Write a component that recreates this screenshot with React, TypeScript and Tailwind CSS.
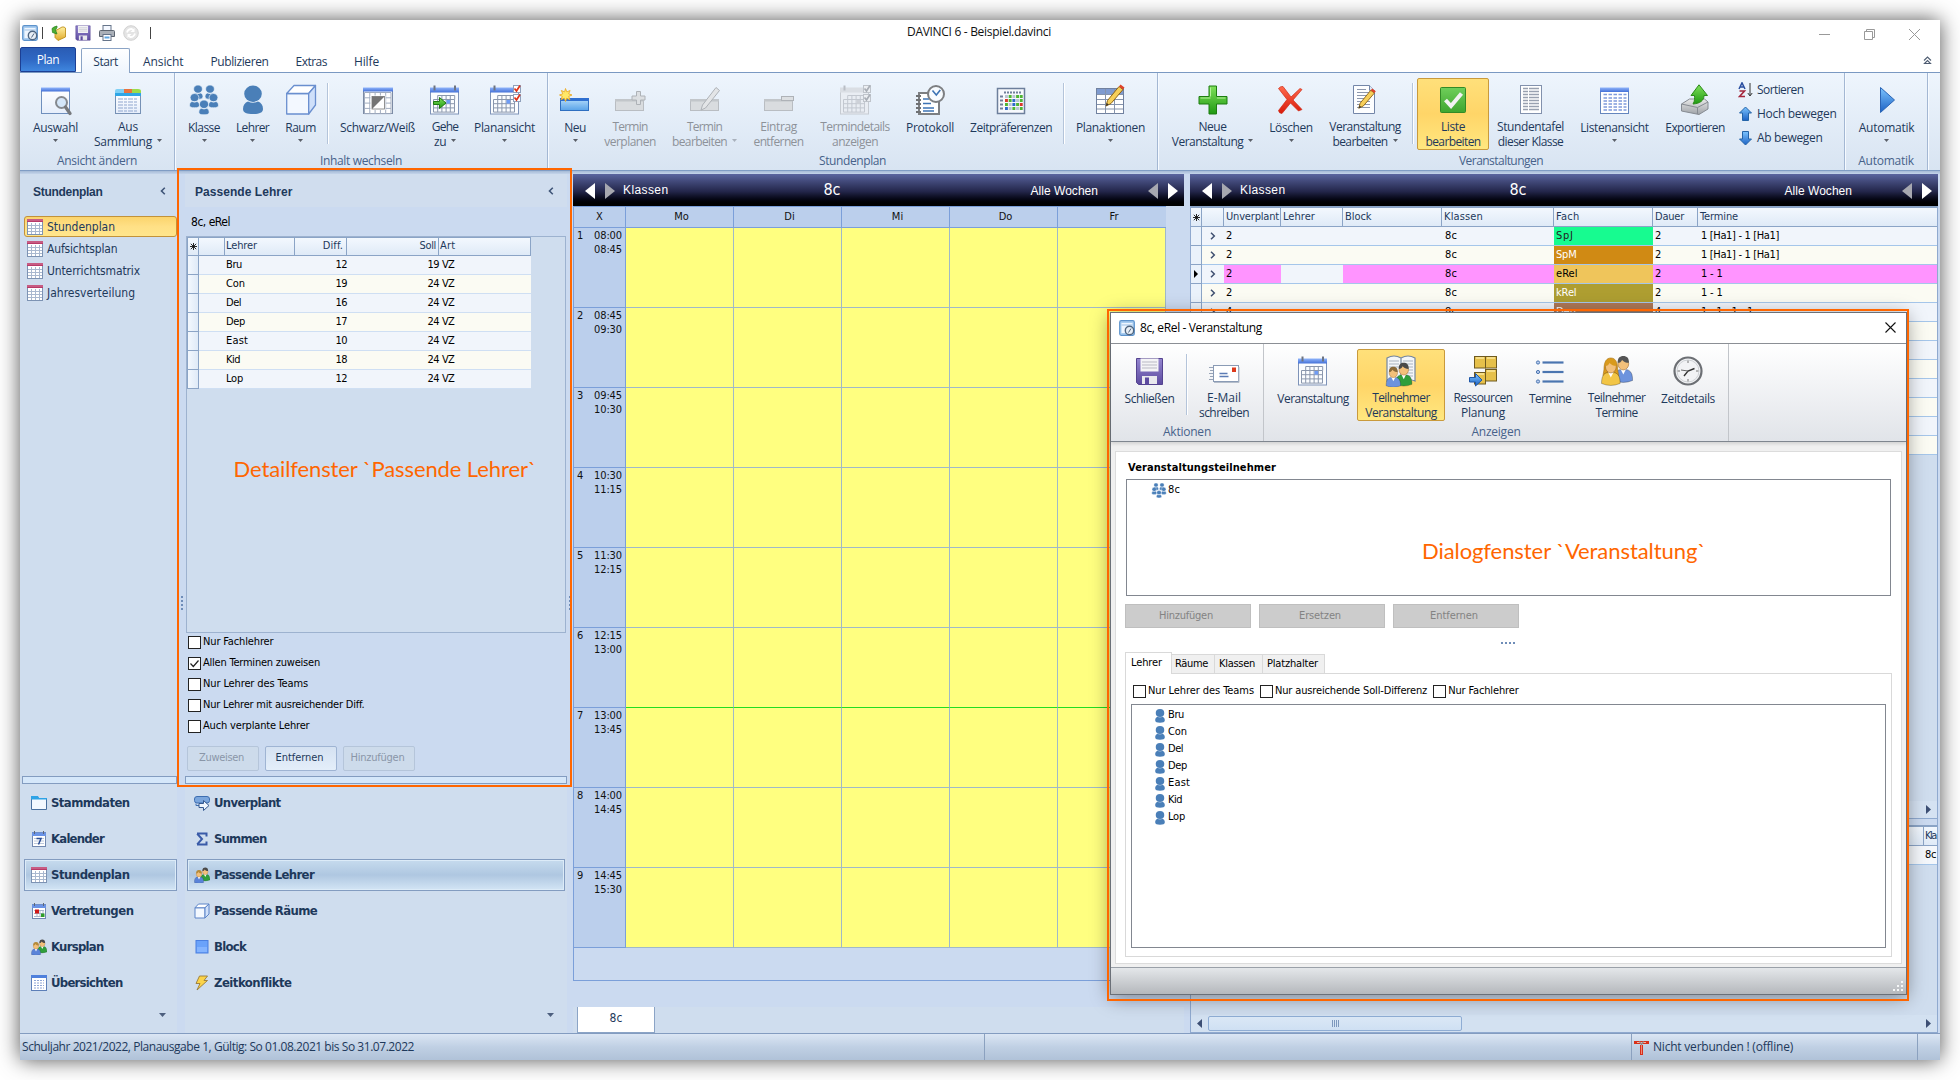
import React, { useLayoutEffect, useRef } from "react";

type Kids = { children?: React.ReactNode };

/** Text tracked so that it takes up the given width in pixels. */
function T({ w, className = "", children }: { w: number; className?: string; children: string }) {
  const ref = useRef<HTMLSpanElement>(null);
  useLayoutEffect(() => {
    const el = ref.current;
    if (!el) return;
    el.style.letterSpacing = "0px";
    const natural = el.getBoundingClientRect().width;
    el.style.letterSpacing = `${(w - natural) / children.length}px`;
  }, [w, children]);
  return (
    <span ref={ref} className={"inline-block whitespace-pre " + className}>
      {children}
    </span>
  );
}

const SEGOE = "font-['Open_Sans',sans-serif]";
const TAHOMA = "font-['DejaVu_Sans_Condensed','Noto_Sans',sans-serif]";
const ARIAL = "font-['Liberation_Sans',sans-serif]";

/* ---------- icons ---------- */

function I32({ children }: Kids) {
  return (
    <svg width="32" height="32" viewBox="0 0 32 32" className="block shrink-0">
      {children}
    </svg>
  );
}
function I16({ children }: Kids) {
  return (
    <svg width="16" height="16" viewBox="0 0 16 16" className="block shrink-0">
      {children}
    </svg>
  );
}

function Defs() {
  const grads: [string, string, string][] = [
    ["gBlue", "#8fb4fb", "#4471d8"],
    ["gGreen", "#7fe05a", "#1f9a12"],
    ["gRed", "#ff6a4d", "#d81a0a"],
    ["gYellow", "#fff0a0", "#e0a92a"],
    ["gPurple", "#9486cf", "#5d4ba0"],
    ["gPaper", "#ffffff", "#e6eefb"],
    ["gSky", "#7cc4ff", "#1d62c4"],
    ["gGray", "#e9e9e9", "#9fa3a8"],
    ["gBar", "#b4dcfb", "#58a2e8"],
    ["gCheck", "#6fcf5a", "#3fa52f"],
  ];
  return (
    <svg width="0" height="0" className="absolute">
      <defs>
        {grads.map(([id, a, b]) => (
          <linearGradient key={id} id={id} x1="0" y1="0" x2="0" y2="1">
            <stop offset="0" stopColor={a} />
            <stop offset="1" stopColor={b} />
          </linearGradient>
        ))}
      </defs>
    </svg>
  );
}

const AuswahlIcon = () => (
  <I32>
    <rect x="1.5" y="4.5" width="28" height="25" fill="url(#gPaper)" stroke="#6f8fbd" />
    <rect x="1" y="3.500" width="29" height="4" fill="url(#gBlue)" />
    <circle cx="21.5" cy="18.5" r="5.5" fill="#cfe3f8" fillOpacity=".85" stroke="#85898f" strokeWidth="2" />
    <path d="M25.5 23l4.500 6.500" stroke="#77797d" strokeWidth="3.2" strokeLinecap="round" />
  </I32>
);
const SammlungIcon = () => (
  <I32>
    <rect x="3.5" y="9.5" width="25" height="20" fill="url(#gPaper)" stroke="#7691b5" />
    <path d="M3 11V7q0-2 2-2h8v6z" fill="#7fd0f5" />
    <path d="M12 9.500V5h8v4.500z" fill="#e8733f" />
    <path d="M20 9.500V5h6q3 0 3 2v2.500z" fill="#9bdc4a" />
    <path d="M3 9h26v3H3z" fill="#2fa6e6" />
    {[15, 18, 21, 24, 27].map((y) => (
      <path key={y} d={`M6 ${y}h20`} stroke="#8fa6cf" strokeDasharray="5 1 3 1" />
    ))}
  </I32>
);
function Person({ x, y, s, fill = "#4a7fb8" }: { x: number; y: number; s: number; fill?: string }) {
  return (
    <g transform={`translate(${x} ${y}) scale(${s})`} fill={fill}>
      <ellipse cx="10" cy="8.200" rx="8.800" ry="8.200" />
      <path d="M0 23.500c0-4 2-6.500 5-7.500q5 2.500 10 0c3 1 5 3.500 5 7.500c0 4-4 5-10 5S0 27.500 0 23.500z" />
    </g>
  );
}
const PeopleShape = () => (
  <g stroke="#eaf2fb" strokeWidth="1.4">
    <Person x={5} y={1} s={0.5} />
    <Person x={17} y={1} s={0.5} />
    <Person x={1.500} y={9.500} s={0.500} />
    <Person x={20.500} y={9.500} s={0.500} />
    <Person x={10.8} y={16} s={0.52} />
  </g>
);
const KlasseIcon = () => (
  <I32>
    <PeopleShape />
  </I32>
);
const LehrerIcon = () => (
  <I32>
    <Person x={6} y={1.5} s={1} />
  </I32>
);
const RaumIcon = () => (
  <I32>
    <g stroke="#6a8fcf" strokeWidth="1.3" strokeLinejoin="round">
      <path d="M1.7 9.5h22v20.5h-22z" fill="#f3f8ff" />
      <path d="M1.7 9.5L9 1.5h21.5l-6.8 8z" fill="#fff" />
      <path d="M23.7 9.5l6.8-8V21l-6.8 9z" fill="#cfe0fa" />
    </g>
  </I32>
);
function GridLines({ x, y, c, r, s = 4, stroke = "#8794ab" }: { x: number; y: number; c: number; r: number; s?: number; stroke?: string }) {
  let d = "";
  for (let i = 0; i <= c; i++) d += `M${x + i * s} ${y}v${r * s}`;
  for (let i = 0; i <= r; i++) d += `M${x} ${y + i * s}h${c * s}`;
  return <path d={d} stroke={stroke} fill="none" />;
}
const SchwarzIcon = () => (
  <I32>
    <rect x="1.5" y="4.5" width="29" height="25" fill="#fff" stroke="#7c8ba5" />
    <GridLines x={2.5} y={8.5} c={5} r={4} s={5.3} stroke="#a2adc0" />
    <rect x="1" y="3.5" width="30" height="4" fill="url(#gBlue)" />
    <rect x="8.5" y="11.5" width="15" height="14.500" fill="#fff" />
    <rect x="10" y="12.500" width="12.500" height="12.500" fill="#fff" stroke="#777" strokeWidth=".8" />
    <path d="M10 12.500h12.500L10 25z" fill="#747474" />
  </I32>
);
function CalShape({ gray = false }: { gray?: boolean }) {
  const line = gray ? "#c6cbd2" : "#7e93b8";
  const inner = gray ? "#c3c8d0" : "#8a97ad";
  return (
    <g>
      <rect x="1.500" y="5.500" width="28" height="24.500" fill={gray ? "#e9edf3" : "#fbfdff"} stroke={line} />
      <rect x="1" y="3.500" width="29" height="5" fill={gray ? "#dadee4" : "url(#gBlue)"} />
      <path d="M5.500 1.500v5M26 1.500v5" stroke={gray ? "#b9bec6" : "#6d7482"} strokeWidth="2" />
      <GridLines x={4.500} y={15.500} c={5} r={3} s={4.200} stroke={inner} />
      <path d="M8.700 11.500h17v4" stroke={inner} fill="none" />
      <path d="M8.700 11.500v4M12.900 11.500v4M17.100 11.500v4M21.300 11.500v4" stroke={inner} />
      <rect x="17.500" y="16" width="3.600" height="3.600" fill={gray ? "#cdd1d8" : "#6f9cf5"} />
    </g>
  );
}
const Ticks = ({ gray = false }: { gray?: boolean }) => (
  <g>
    {[1, 10].map((y) => (
      <g key={y}>
        <rect x="24.500" y={y + 0.500} width="7" height="7" fill={gray ? "#eceff3" : "#fff"} stroke={gray ? "#bfc4cb" : "#8fa0bb"} />
        <path d={`M25.500 ${y + 3.500}l2 2.500 3.500-5.500`} fill="none" stroke={gray ? "#a9aeb6" : "#e03217"} strokeWidth="1.700" />
      </g>
    ))}
  </g>
);
const GeheIcon = () => (
  <I32>
    <CalShape />
    <path d="M4.500 17.500h6v-4l6.500 5.500-6.500 5.500v-4h-6z" fill="url(#gGreen)" stroke="#1f7a10" />
  </I32>
);
const PlanansichtIcon = () => (
  <I32>
    <CalShape />
    <Ticks />
  </I32>
);
const CalIcon = () => (
  <I32>
    <CalShape />
  </I32>
);
const TermindetailsIcon = () => (
  <I32>
    <CalShape gray />
    <Ticks gray />
  </I32>
);
const NeuIcon = () => (
  <I32>
    <rect x="1.500" y="14.500" width="28" height="12" fill="url(#gBar)" stroke="#2f6fc0" />
    <rect x="1" y="14" width="29" height="3" fill="#2f6fd0" />
    <path d="M6.500 4.500l1.300 3.400 3.300-1.400-1.400 3.300 3.300 1.200-3.300 1.400 1.300 3.300-3.300-1.400-1.200 3.200-1.300-3.300-3.300 1.500 1.400-3.400L.5 11l3.300-1.200-1.500-3.300 3.300 1.400z" fill="#ffe868" stroke="#eaa51c" strokeWidth=".8" />
  </I32>
);
const GrayBar = () => (
  <g>
    <rect x="1.500" y="15.500" width="28" height="11" fill="#d9dcdf" stroke="#b9bdc2" />
    <rect x="1" y="15" width="29" height="2.500" fill="#c2c6ca" />
  </g>
);
const TerminPlusIcon = () => (
  <I32>
    <GrayBar />
    <path d="M22.500 7.500h4v4.500h4.500v4h-4.500v4.500h-4V16H18v-4h4.500z" fill="#dcdfe2" stroke="#aeb2b7" />
  </I32>
);
const TerminEditIcon = () => (
  <I32>
    <GrayBar />
    <path d="M12 26l1.500-5L27 3.500l3.500 3L16.500 24z" fill="#e3e5e7" stroke="#aeb2b7" />
  </I32>
);
const EintragIcon = () => (
  <I32>
    <GrayBar />
    <rect x="18.500" y="12.500" width="12" height="4" fill="#dcdfe2" stroke="#aeb2b7" />
  </I32>
);
const ProtokollIcon = () => (
  <I32>
    <rect x="5" y="9" width="20" height="21" fill="#fff" stroke="#7d7f82" strokeWidth="2" />
    <path d="M2 12h5M2 16h5M2 20h5M2 24h5M2 28h5" stroke="#6f7174" strokeWidth="1.800" />
    <path d="M9 15h6M9 19.500h8M9 24h11M9 27h11" stroke="#3e74b5" strokeWidth="1.600" />
    <circle cx="22" cy="10" r="8" fill="#f7fbff" stroke="#7d7f82" strokeWidth="2" />
    <path d="M18.500 6.500l3.800 4.500 4-5" fill="none" stroke="#3e74b5" strokeWidth="1.600" />
  </I32>
);
const ZeitIcon = () => (
  <I32>
    <rect x="2.500" y="4.500" width="27" height="25" fill="#f7f9fd" stroke="#6d7f9c" strokeWidth="1.500" />
    <path d="M9 8.500h18" stroke="#6f7f9b" strokeWidth="2" strokeDasharray="2 1" />
    <path d="M5 12.500h3M5 16.500h3M5 20.500h3M5 24.500h3" stroke="#6f7f9b" strokeWidth="2" />
    {[0, 1, 2, 3].map((r) =>
      [0, 1, 2, 3, 4].map((c) => {
        const k = "wgwggrgbwggwbgrbwgwg"[r * 5 + c];
        const f = k === "g" ? "#4fb534" : k === "b" ? "#2f6ac8" : k === "r" ? "#d8382a" : "#b9c4d2";
        return <rect key={r + "-" + c} x={10 + c * 3.700} y={11 + r * 4} width="2.900" height="3" fill={f} />;
      })
    )}
  </I32>
);
const Pencil = ({ x = 0, y = 0, s = 1 }: { x?: number; y?: number; s?: number }) => (
  <g transform={`translate(${x} ${y}) scale(${s})`}>
    <path d="M9 22l1.500-5.500L22 2.500l4 3L14 19.500z" fill="#f6cf5a" stroke="#8e6415" />
    <path d="M22 2.500l1.500-2 4 3-1.500 2z" fill="#e0432a" />
    <path d="M9 22l.8-3 2 1.600z" fill="#333" />
  </g>
);
const PlanaktionenIcon = () => (
  <I32>
    <rect x="1.500" y="4.500" width="27" height="25" fill="#fff" stroke="#70819f" />
    <rect x="2" y="5" width="26" height="5" fill="#7f9bd0" />
    <path d="M2 10.500h26M2 15.500h26M2 20.500h26M2 25h26M10.500 5v24.500M19.500 5v24.500" stroke="#8593ab" fill="none" />
    <Pencil x={2} y={0} />
  </I32>
);
const PlusIcon = () => (
  <I32>
    <path d="M12 2h7.500v10.500H30V20H19.500v10H12V20H2v-7.500h10z" fill="url(#gGreen)" stroke="#1d7d10" />
    <path d="M13.500 12.500v-9M3.500 14h10M20 14h8.500" stroke="#b4f09a" fill="none" />
  </I32>
);
const DeleteIcon = () => (
  <I32>
    <path d="M3.500 4.500q2-2.500 4.500-2L16 13l9-8.500 2 1L18 16l9 9.500-3.500 1.500L15.500 19 7 29.500q-3 0-3.500-3L12 15.500z" fill="url(#gRed)" stroke="#cf2a16" strokeWidth=".7" />
  </I32>
);
const DocEditIcon = () => (
  <I32>
    <path d="M4.500 1.500h16l5 5v23h-21z" fill="#fdfeff" stroke="#7386a8" />
    <path d="M20.500 1.500v5h5" fill="#dfe8f6" stroke="#7386a8" />
    {[5, 8, 11, 14, 17, 20, 23].map((y) => (
      <path key={y} d={`M8 ${y}.500h${y < 8 ? 9 : 13}`} stroke="#8c97ad" />
    ))}
    <Pencil x={1.500} y={4} s={0.920} />
  </I32>
);
const ListeIcon = () => (
  <I32>
    <rect x="3.500" y="3.500" width="25" height="25" rx="1" fill="url(#gCheck)" stroke="#338a26" />
    <path d="M8.500 16l5.500 6L24.500 9.500" stroke="#f2f2f2" strokeWidth="4" fill="none" />
  </I32>
);
const TafelIcon = () => (
  <I32>
    <rect x="5.500" y="1.500" width="21" height="28" fill="#fff" stroke="#8291ad" />
    {[4, 7, 10, 13, 16, 19, 22, 25].map((y) => (
      <path key={y} d={`M8 ${y}.500h5M14 ${y}.500h10`} stroke="#99a1b0" strokeWidth="1.300" />
    ))}
  </I32>
);
const ListenIcon = () => (
  <I32>
    <rect x="1.500" y="4.500" width="28" height="25" fill="#fff" stroke="#6485bd" />
    <rect x="1" y="3.500" width="29" height="4.500" fill="url(#gBlue)" />
    {[10.500, 14, 17, 20, 23, 26].map((y) => (
      <path key={y} d={`M4.500 ${y}h23`} stroke="#7f9bdc" strokeWidth="1.300" strokeDasharray="3.500 1.500" />
    ))}
  </I32>
);
const ExportIcon = () => (
  <I32>
    <path d="M2.500 20l8-5h15l3.500 3v7l-9 5.500L2.500 27z" fill="url(#gGray)" stroke="#868b92" />
    <path d="M2.500 20l16 3.500L29 18M18.500 23.500v6.500" fill="none" stroke="#868b92" />
    <path d="M14 20c2-3 1.500-6 1.500-8.500H12L20 .8l8.500 10.700H25c0 5-4 8-11 8.500z" fill="url(#gGreen)" stroke="#2c8a1a" />
  </I32>
);
const PlayIcon = () => (
  <I32>
    <path d="M9.500 3.500L23.500 16l-14 12.500z" fill="url(#gSky)" stroke="#2a64b5" />
  </I32>
);
const DiskShape = () => (
  <g>
    <path d="M2.500 3.500h26v26h-24l-2-2z" fill="url(#gPurple)" stroke="#54438f" />
    <rect x="6.500" y="3.500" width="18" height="13" fill="#f4f4f6" />
    <path d="M8 7h15M8 10h15M8 13h15" stroke="#b9b9c4" />
    <rect x="8" y="21" width="15" height="8" fill="#e9e9ee" />
    <rect x="11" y="22.500" width="4" height="7" fill="#5d4ba0" />
  </g>
);
const DiskIcon = () => (
  <I32>
    <DiskShape />
  </I32>
);
const MailIcon = () => (
  <I32>
    <rect x="5.500" y="10.500" width="25" height="16" fill="#fff" stroke="#8a9bb5" />
    <path d="M6 27.500h25V12" stroke="#b4bdca" fill="none" />
    <path d="M1 12.500h4M2 15.500h3M1 18.500h4M2 21.500h3M1 24.500h4" stroke="#98a4b7" />
    <rect x="24" y="12.500" width="4" height="4.500" fill="#dd3a1c" />
    <path d="M11.500 18.500h8M11.500 21.500h9" stroke="#5c7cb5" strokeWidth="1.400" />
  </I32>
);
function Avatar({ x, y, s, shirt, hair, long = false }: { x: number; y: number; s: number; shirt: string; hair: string; long?: boolean }) {
  return (
    <g transform={`translate(${x} ${y}) scale(${s})`}>
      {long && <path d="M2 12C2 3 5 0 9 0s7 3 7 12l1 6H1z" fill="#d99a1c" stroke="#a8710e" strokeWidth=".6" />}
      <path d="M-.5 26c0-7 2-10 5.500-11h8c3.500 1 5.500 4 5.500 11q-9.500 4-19 0z" fill={shirt} stroke="#00000055" strokeWidth=".8" />
      <path d="M6 14l3 6 3-6z" fill="#fff" />
      <ellipse cx="9" cy="9" rx="5.500" ry="6.200" fill="#f3c07a" stroke="#a0692b" strokeWidth=".6" />
      <path d="M3.300 8C3 3 5.500 1 9 1s6 2 5.700 7c-3 0-5-1-7-3-1 2-2 3-4.400 3z" fill={hair} />
    </g>
  );
}
const TeilnehmerVerIcon = () => (
  <I32>
    <path d="M2 3q7-4 14 0v23q-7-3-14 0zM30 3q-7-4-14 0v23q7-3 14 0z" fill="#f4f6f8" stroke="#73869f" strokeWidth="1.200" />
    <path d="M18 6h10M18 9h10M18 12h10M18 15h10M18 18h10M18 21h10M4 6h10M4 9h10M4 12h10" stroke="#a9b3c0" />
    <Avatar x={11} y={7} s={0.860} shirt="#2f9e3b" hair="#4a4a4a" />
    <Avatar x={1.500} y={11} s={0.760} shirt="#6d93dd" hair="#8a6a3a" />
  </I32>
);
const RessourcenIcon = () => (
  <I32>
    {[[8, 1], [19, 1], [19, 14], [8, 17]].map(([x, y], i) => (
      <g key={i}>
        <rect x={x - 0.500} y={y + 0.500} width="11" height="11.500" fill="#e6c04a" stroke="#6f5a20" />
        <path d={`M${x + 1} ${y + 2}h8`} stroke="#fbe79a" strokeWidth="1.500" />
      </g>
    ))}
    <path d="M2.500 22.500h6v-4l6.500 6.500-6.500 6v-4h-6z" fill="url(#gSky)" stroke="#1f57a8" />
  </I32>
);
const TermineIcon = () => (
  <I32>
    {[7.500, 17, 26.500].map((y) => (
      <g key={y} stroke="#4a75b0">
        <circle cx="4" cy={y} r="1.600" fill="#b8cdf0" />
        <path d={`M8.500 ${y}h21`} strokeWidth="2.200" />
      </g>
    ))}
  </I32>
);
const TeilnehmerIcon = () => (
  <I32>
    <Avatar x={13.500} y={0} s={0.980} shirt="#6d93dd" hair="#555" />
    <Avatar x={1} y={3} s={0.980} shirt="#f2c545" hair="#d99a1c" long />
  </I32>
);
const ClockIcon = () => (
  <I32>
    <circle cx="16" cy="16" r="13.500" fill="#f2f3f5" stroke="#6c6f74" strokeWidth="2.200" />
    <circle cx="16" cy="16" r="11" fill="none" stroke="#cfd2d6" />
    <path d="M16 5.500v2.500M16 24v2.500M5.500 16H8M24 16h2.500" stroke="#777" />
    <path d="M12 21l4-5 6.500-2.500" stroke="#333" strokeWidth="1.400" fill="none" />
    <path d="M9 15l7 1" stroke="#666" />
  </I32>
);

const AppIcon = () => (
  <I16>
    <rect x=".7" y=".7" width="14.600" height="14.600" rx="1.500" fill="#a9cdf0" stroke="#5d93cc" strokeWidth="1.200" />
    <path d="M2.500 3h11v10h-11z" fill="#eef6ff" />
    <path d="M2.500 5h11" stroke="#9fc1e4" />
    <circle cx="10.500" cy="10.500" r="4.200" fill="#e8eef5" stroke="#4f6681" strokeWidth="1.400" />
    <path d="M9.500 12.500l2.500-4" stroke="#4f6681" />
  </I16>
);
const FolderOpenIcon = () => (
  <I16>
    <path d="M4 6l7-4h2l1.500 1v9L7 15.500l-3-3z" fill="url(#gYellow)" stroke="#b8860b" strokeWidth=".8" />
    <path d="M1.500 7.500L1 3.500 3 2l3-1v1.500L4.500 5l1.500 4z" fill="#4caf35" stroke="#22801a" strokeWidth=".7" />
  </I16>
);
const SmallDisk = () => (
  <svg width="16" height="16" viewBox="1 2 29 29" className="block shrink-0">
    <DiskShape />
  </svg>
);
const PrinterIcon = () => (
  <I16>
    <rect x="4" y=".5" width="8" height="6" fill="#f4f8ff" stroke="#66758a" />
    <path d="M.5 6.500q0-1 1-1h13q1 0 1 1v5H.5z" fill="#aab0b8" stroke="#5c6570" />
    <rect x="4" y="9.500" width="8" height="6" fill="#fff" stroke="#66758a" />
    <path d="M5.500 11.500h5v2h-5z" fill="#5da4e0" />
  </I16>
);
const SyncIcon = () => (
  <I16>
    <circle cx="8" cy="8" r="7.300" fill="#e4e4e4" stroke="#d2d2d2" />
    <path d="M4 7.500Q5 4 8.500 4l2 1M12 8.500Q11 12 7.500 12l-2-1" stroke="#fff" strokeWidth="1.800" fill="none" />
    <path d="M11.500 3v4h-4zM4.500 13V9h4z" fill="#fff" />
  </I16>
);
const TableIcon = () => (
  <I16>
    <rect x=".5" y=".5" width="15" height="15" fill="#fff" stroke="#7d93b3" />
    <rect x="0" y="0" width="16" height="3" fill="#b83a68" />
    <path d="M0 1h16" stroke="#d67f9e" />
    <path d="M1 6.500h14M1 9.500h14M1 12.500h14M4.500 4v11M8.500 4v11M12.500 4v11" stroke="#a9b8cf" />
  </I16>
);
const FolderIcon = () => (
  <I16>
    <path d="M.5 14.500v-13h6l1 2h8v11z" fill="#f2f8ff" stroke="#49709f" />
    <path d="M0 4.500V1h7l1 2h8v1.500z" fill="#2ea3e6" />
  </I16>
);
const Cal7Icon = () => (
  <I16>
    <rect x="1.500" y="1.500" width="13" height="14" fill="#fff" stroke="#7188b0" />
    <rect x="1" y="1.500" width="14" height="3.500" fill="#6a93e6" />
    <path d="M3.500 0v3M12.500 0v3" stroke="#5d6678" />
    <path d="M3 7.500h10M3 10h10M3 12.500h10" stroke="#bcc8dc" />
    <path d="M5.500 7.500h4.500l-2.500 6" stroke="#2a4d94" strokeWidth="1.500" fill="none" />
  </I16>
);
const VertretungIcon = () => (
  <I16>
    <rect x="1.500" y="1.500" width="13" height="14" fill="#fff" stroke="#7188b0" />
    <rect x="1" y="1.500" width="14" height="3.500" fill="#6a93e6" />
    <path d="M3.500 0v3M12.500 0v3" stroke="#5d6678" />
    <path d="M3 7.500h10M3 10.500h10M3 13.500h10M6 7v7M9 7v7M12 7v7" stroke="#a9b6cc" />
    <rect x="4" y="6.500" width="4" height="4" fill="#d01818" />
    <rect x="10" y="10.500" width="3.500" height="3.500" fill="#2f9e28" />
  </I16>
);
const DuoIcon = () => (
  <svg width="16" height="16" viewBox="0 0 32 32" className="block shrink-0">
    <Avatar x={13.500} y={0} s={1} shirt="#2f9e3b" hair="#4a4a4a" />
    <Avatar x={1} y={5} s={1} shirt="#5a83d8" hair="#b58a3a" />
  </svg>
);
const UebersichtIcon = () => (
  <I16>
    <rect x=".5" y=".5" width="15" height="15" fill="#fff" stroke="#5d7fb8" />
    <rect x="0" y="0" width="16" height="3" fill="#4f80dc" />
    <path d="M3 5.500h10M3 8h10M3 10.500h10M3 13h10" stroke="#8fa6d6" strokeDasharray="2 1" />
  </I16>
);
const UnverplantIcon = () => (
  <I16>
    <rect x=".5" y="1.500" width="15" height="6.500" rx="2.500" fill="#7ba6dd" stroke="#3d6db0" />
    <path d="M2 8.500v2h4" stroke="#3d6db0" fill="none" />
    <path d="M5 8.500h4.500v-3l5.500 5-5.500 5v-3H5z" fill="#eff6ff" stroke="#34588f" />
  </I16>
);
const SigmaIcon = () => (
  <I16>
    <path d="M3 2.500h9.500v3M3.200 2.800L8 8l-4.800 5.300M3 13.500h9.500v-3" fill="none" stroke="#3a5ba8" strokeWidth="2" />
  </I16>
);
const CubeSmall = () => (
  <svg width="16" height="16" viewBox="0 0 32 32" className="block shrink-0">
    <g strokeWidth="2">
      <path d="M2 9.500h20V30H2z" fill="#f3f8ff" stroke="#5c84c8" />
      <path d="M2 9.500L9 2h21l-8 7.500z" fill="#fff" stroke="#5c84c8" />
      <path d="M22 9.500L30 2v20l-8 8z" fill="#cfe0fa" stroke="#5c84c8" />
    </g>
  </svg>
);
const BlockIcon = () => (
  <I16>
    <rect x="2" y="1.500" width="12" height="12.500" fill="#6aa2fa" stroke="#4a7fe0" />
    <rect x="3" y="8" width="10" height="5" fill="#84b4ff" />
  </I16>
);
const BoltIcon = () => (
  <I16>
    <path d="M5.500 1h8l-3.500 4.500h3.500L3 15l3-6.500H2z" fill="#fbd34a" stroke="#9a7a35" strokeWidth=".9" />
  </I16>
);
const PeopleSmall = () => (
  <svg width="16" height="15" viewBox="1 1 30 30" className="block shrink-0">
    <PeopleShape />
  </svg>
);
const PersonSmall = () => (
  <svg width="12" height="14" viewBox="0 0 20 29" className="block shrink-0">
    <Person x={0} y={0} s={1} />
  </svg>
);
const SortIcon = () => (
  <svg width="15" height="16" viewBox="0 0 15 16" className="block shrink-0">
    <path d="M1 7L4 0.800 7 7M2.200 5h3.600" stroke="#2b4fa0" strokeWidth="1.500" fill="none" />
    <path d="M1.500 9h5l-5 5.500h5.500" stroke="#a3263c" strokeWidth="1.600" fill="none" />
    <path d="M12 1v12M9.800 11l2.200 3 2.200-3" stroke="#333" fill="none" />
  </svg>
);
const ArrowUpIcon = () => (
  <svg width="15" height="16" viewBox="0 0 15 16" className="block shrink-0">
    <path d="M7.500 1l6 6h-3v7.500h-6V7h-3z" fill="url(#gSky)" stroke="#2464a8" />
  </svg>
);
const ArrowDownIcon = () => (
  <svg width="15" height="16" viewBox="0 0 15 16" className="block shrink-0">
    <path d="M7.500 15l-6-6h3V1.500h6V9h3z" fill="url(#gSky)" stroke="#2464a8" />
  </svg>
);

function Caret({ className = "" }: { className?: string }) {
  return (
    <svg width="5" height="3" viewBox="0 0 5 3" className={"inline-block shrink-0 " + className}>
      <path d="M0 0h5L2.500 3z" fill="#5a5f68" />
    </svg>
  );
}
function Chevron() {
  return (
    <svg width="6" height="8" viewBox="0 0 6 8" className="block shrink-0">
      <path d="M4.800 .8L1.500 4l3.300 3.200" fill="none" stroke="#3f5578" strokeWidth="1.600" />
    </svg>
  );
}
function Tri({ dir, dim = false }: { dir: "l" | "r"; dim?: boolean }) {
  return (
    <svg width="10" height="16" viewBox="0 0 10 16" className="block shrink-0">
      <path d={dir === "l" ? "M10 0v16L0 8z" : "M0 0v16l10-8z"} fill={dim ? "#a7a8b0" : "#fff"} />
    </svg>
  );
}

/* ---------- ribbon ---------- */

type Line = [string, number];
function RB({
  className,
  icon,
  l1,
  l2,
  drop = false,
  off = false,
  active = false,
}: {
  className: string;
  icon: React.ReactNode;
  l1: Line;
  l2?: Line;
  drop?: boolean;
  off?: boolean;
  active?: boolean;
}) {
  return (
    <div
      className={
        "flex h-[72px] shrink-0 flex-col items-center rounded-[2px] border pt-[5px] " +
        (active ? "border-[#c99a3c] bg-linear-to-b from-[#ffe07a] via-[#ffd568] to-[#ffe77f] " : "border-transparent ") +
        (off ? "text-[#8d9299] " : "text-[#1e395b] ") +
        className
      }
    >
      <div className="h-[36px]">{icon}</div>
      <T w={l1[1]} className="h-[15px] leading-[15px]">
        {l1[0]}
      </T>
      {l2 ? (
        <div className="flex h-[15px] items-center gap-[5px]">
          <T w={l2[1]} className="leading-[15px]">
            {l2[0]}
          </T>
          {drop && <Caret className={off ? "mb-[3px] opacity-40" : "mb-[3px]"} />}
        </div>
      ) : (
        drop && <Caret className="mt-[4px]" />
      )}
    </div>
  );
}
function Group({ className, pad = "", caption, children }: { className: string; pad?: string; caption: Line } & Kids) {
  return (
    <div className={"flex h-full shrink-0 flex-col border-r pt-[5px] " + className}>
      <div className={"flex h-[75px] " + pad}>{children}</div>
      <div className="text-center leading-[16px] text-[#47628a]">
        <T w={caption[1]}>{caption[0]}</T>
      </div>
    </div>
  );
}
const Sep = ({ className = "" }: { className?: string }) => (
  <div className={"mt-[5px] h-[61px] w-px shrink-0 bg-[#b4c4da] shadow-[1px_0_0_#fff] " + className} />
);

function Ribbon() {
  const g = "border-[#a3b7d3] shadow-[1px_0_0_#f6faff] ";
  return (
    <div className={"flex h-[97px] text-[12px] bg-linear-to-b from-[#eef5fd] to-[#d8e4f2] " + SEGOE}>
      <Group className={g + "w-[155px]"} caption={["Ansicht ändern", 80]}>
        <RB className="w-[71px]" icon={<AuswahlIcon />} l1={["Auswahl", 45]} drop />
        <RB className="w-[74px]" icon={<SammlungIcon />} l1={["Aus", 20]} l2={["Sammlung", 58]} drop />
      </Group>
      <Group className={g + "w-[373px]"} pad="pl-[5px]" caption={["Inhalt wechseln", 82]}>
        <RB className="w-[48px]" icon={<KlasseIcon />} l1={["Klasse", 32]} drop />
        <RB className="w-[49px]" icon={<LehrerIcon />} l1={["Lehrer", 33]} drop />
        <RB className="w-[47px]" icon={<RaumIcon />} l1={["Raum", 30.500]} drop />
        <Sep className="mr-[4px] ml-[3px]" />
        <RB className="w-[91px]" icon={<SchwarzIcon />} l1={["Schwarz/Weiß", 75]} />
        <RB className="w-[44px]" icon={<GeheIcon />} l1={["Gehe", 26.500]} l2={["zu", 12]} drop />
        <RB className="w-[75px]" icon={<PlanansichtIcon />} l1={["Planansicht", 61]} drop />
      </Group>
      <Group className={g + "w-[610px]"} pad="pl-[3px]" caption={["Stundenplan", 67]}>
        <RB className="w-[48px]" icon={<NeuIcon />} l1={["Neu", 21.500]} drop />
        <RB className="w-[62px]" icon={<TerminPlusIcon />} l1={["Termin", 35]} l2={["verplanen", 51.500]} off />
        <RB className="w-[87px]" icon={<TerminEditIcon />} l1={["Termin", 35]} l2={["bearbeiten", 55]} off drop />
        <RB className="w-[61px]" icon={<EintragIcon />} l1={["Eintrag", 36.500]} l2={["entfernen", 50]} off />
        <RB className="w-[92px]" icon={<TermindetailsIcon />} l1={["Termindetails", 69.500]} l2={["anzeigen", 46]} off />
        <RB className="w-[58px]" icon={<ProtokollIcon />} l1={["Protokoll", 48]} />
        <RB className="w-[104px]" icon={<ZeitIcon />} l1={["Zeitpräferenzen", 82]} />
        <Sep className="mr-[4px]" />
        <RB className="w-[85px]" icon={<PlanaktionenIcon />} l1={["Planaktionen", 69]} drop />
      </Group>
      <Group className={g + "w-[687px]"} pad="pl-[7px]" caption={["Veranstaltungen", 84]}>
        <RB className="w-[95px]" icon={<PlusIcon />} l1={["Neue", 28]} l2={["Veranstaltung", 71.500]} drop />
        <RB className="w-[62px]" icon={<DeleteIcon />} l1={["Löschen", 43.500]} drop />
        <RB className="w-[86px]" icon={<DocEditIcon />} l1={["Veranstaltung", 71.500]} l2={["bearbeiten", 55]} drop />
        <Sep className="mr-[4px] ml-[4px]" />
        <RB className="w-[72px]" icon={<ListeIcon />} l1={["Liste", 24]} l2={["bearbeiten", 55]} active />
        <RB className="w-[83px]" icon={<TafelIcon />} l1={["Stundentafel", 67]} l2={["dieser Klasse", 65.500]} />
        <RB className="w-[85px]" icon={<ListenIcon />} l1={["Listenansicht", 68.500]} drop />
        <RB className="w-[76px]" icon={<ExportIcon />} l1={["Exportieren", 59.500]} />
        <div className="flex flex-col pl-[5px] text-[#1e395b]">
          {(
            [
              ["Sortieren", 46.500, <SortIcon />],
              ["Hoch bewegen", 79.500, <ArrowUpIcon />],
              ["Ab bewegen", 65.500, <ArrowDownIcon />],
            ] as [string, number, React.ReactNode][]
          ).map(([t, w, ic]) => (
            <div key={t} className="flex h-[24px] items-center gap-[4px]">
              {ic}
              <T w={w}>{t}</T>
            </div>
          ))}
        </div>
      </Group>
      <Group className={g + "w-[83px]"} pad="pl-[5px]" caption={["Automatik", 55.500]}>
        <RB className="w-[73px]" icon={<PlayIcon />} l1={["Automatik", 55.500]} drop />
      </Group>
    </div>
  );
}

function TitleArea() {
  return (
    <div className={"h-[53px] border-b border-[#7a99c2] bg-white text-[12px] " + SEGOE}>
      <div className="flex h-[26px] items-center justify-between">
        <div className="flex w-[500px] items-center gap-[8px] pl-[2px]">
          <AppIcon />
          <div className="-ml-[4px] h-[12px] w-px bg-[#444]" />
          <FolderOpenIcon />
          <SmallDisk />
          <PrinterIcon />
          <SyncIcon />
          <div className="ml-[3px] h-[12px] w-px bg-[#444]" />
        </div>
        <T w={146} className="pr-[2px] pb-[2px] text-[#111]">
          DAVINCI 6 - Beispiel.davinci
        </T>
        <div className="flex w-[500px] items-center justify-end gap-[34px] pt-[2px] pr-[20px]">
          <svg width="11" height="11" viewBox="0 0 11 11">
            <path d="M0 5.500h11" stroke="#999" />
          </svg>
          <svg width="11" height="11" viewBox="0 0 11 11">
            <path d="M.5 2.500h8v8h-8zM2.500 2.500v-2h8v8h-2" fill="none" stroke="#999" />
          </svg>
          <svg width="11" height="11" viewBox="0 0 11 11">
            <path d="M0 0l11 11M11 0L0 11" stroke="#999" />
          </svg>
        </div>
      </div>
      <div className="flex h-[26px] items-start">
        <div className="mt-[1px] flex h-[25px] w-[56px] justify-center rounded-t-[2px] border border-[#1c3f94] bg-linear-to-b from-[#2a5cb4] via-[#2f68c4] to-[#3f86de] pt-[3px] leading-[17px] text-white">
          <T w={22.500}>Plan</T>
        </div>
        <div className="mt-[2px] ml-[5px] flex h-[25px] w-[49px] justify-center rounded-t-[2px] border border-b-0 border-[#8ba4c6] bg-linear-to-b from-white to-[#eef5fd] pt-[4px] leading-[17px] text-[#1e395b]">
          <T w={24.500}>Start</T>
        </div>
        <div className="mt-[7px] flex leading-[17px] text-[#1e395b]">
          <T w={40.500} className="ml-[13px]">Ansicht</T>
          <T w={58} className="ml-[27px]">Publizieren</T>
          <T w={31.500} className="ml-[27px]">Extras</T>
          <T w={25} className="ml-[27px]">Hilfe</T>
        </div>
        <svg width="9" height="9" viewBox="0 0 9 9" className="mt-[10px] mr-[8px] ml-auto">
          <path d="M1 4.500L4.500 1 8 4.500M1.500 7.500l3-3 3 3z" fill="none" stroke="#4f5d72" strokeWidth="1.100" />
        </svg>
      </div>
    </div>
  );
}

/* ---------- left panels ---------- */

function NavItem({ icon, text, w, active = false }: { icon: React.ReactNode; text: string; w: number; active?: boolean }) {
  return (
    <div className="flex h-[36px] items-center">
      <div
        className={
          "flex h-[32px] w-full items-center gap-[4px] border pl-[6px] text-[13px] font-bold text-[#1e395b] " +
          TAHOMA +
          (active ? " border-[#839cc0] bg-linear-to-b from-[#c6dbee] via-[#afc7e1] to-[#d3e5f5] shadow-[inset_0_0_0_1px_#dcebf8]" : " border-transparent")
        }
      >
        {icon}
        <T w={w}>{text}</T>
      </div>
    </div>
  );
}
const BigCaret = () => (
  <svg width="7" height="4" viewBox="0 0 7 4" className="block">
    <path d="M0 0h7L3.500 4z" fill="#4d5f7e" />
  </svg>
);

function LeftPanel() {
  const items: Line[] = [
    ["Stundenplan", 68],
    ["Aufsichtsplan", 70.500],
    ["Unterrichtsmatrix", 93],
    ["Jahresverteilung", 88],
  ];
  return (
    <div className={"flex w-[157px] shrink-0 flex-col bg-[#cfddee] " + TAHOMA}>
      <div className={"flex h-[42px] items-start justify-between pt-[9px] pr-[11px] pl-[13px] text-[12px] leading-[18px] font-bold text-[#1e395b] " + ARIAL}>
        <T w={69.500}>Stundenplan</T>
        <div className="pt-[4px]">
          <Chevron />
        </div>
      </div>
      <div className="flex h-[560px] flex-col pl-[4px] text-[12px] text-[#1e395b]">
        {items.map(([t, w], i) => (
          <div
            key={t}
            className={
              "mb-[1px] flex h-[21px] items-center gap-[4px] border pl-[2px] " +
              (i === 0 ? "rounded-[3px] border-[#c2923a] bg-linear-to-b from-[#fbd46c] via-[#ffe086] to-[#ffe68c]" : "border-transparent")
            }
          >
            <TableIcon />
            <T w={w}>{t}</T>
          </div>
        ))}
      </div>
      <div className="ml-[2px] h-[8px] border border-[#839cc0] bg-[#d5e7fa]" />
      <div className="flex flex-col pt-[1px] pl-[4px]">
        <NavItem icon={<FolderIcon />} text="Stammdaten" w={78.500} />
        <NavItem icon={<Cal7Icon />} text="Kalender" w={53} />
        <NavItem icon={<TableIcon />} text="Stundenplan" w={78.500} active />
        <NavItem icon={<VertretungIcon />} text="Vertretungen" w={82.500} />
        <NavItem icon={<DuoIcon />} text="Kursplan" w={52.500} />
        <NavItem icon={<UebersichtIcon />} text="Übersichten" w={71.500} />
      </div>
      <div className="mt-[12px] ml-[139px]">
        <BigCaret />
      </div>
    </div>
  );
}

function Check({ text, w, on = false }: { text: string; w: number; on?: boolean }) {
  return (
    <div className="flex h-[13px] items-center gap-[2px] text-[11px] text-black">
      <svg width="13" height="13" viewBox="0 0 13 13" className="block shrink-0">
        <rect x=".5" y=".5" width="12" height="12" fill="#fff" stroke="#222" />
        {on && <path d="M2.500 6.500l2.800 3L10.500 3.500" fill="none" stroke="#222" strokeWidth="1.200" />}
      </svg>
      <T w={w}>{text}</T>
    </div>
  );
}

function Grip({ vertical = false }: { vertical?: boolean }) {
  return (
    <div className={"flex gap-[2px] " + (vertical ? "flex-col" : "")}>
      {[0, 1, 2, 3].map((i) => (
        <div key={i} className="h-[2px] w-[2px] bg-[#6f8db8]" />
      ))}
    </div>
  );
}

const Star = () => (
  <svg width="7" height="7" viewBox="0 0 7 7" className="block shrink-0">
    <path d="M3.500 0v7M0 3.500h7M.8 .8l5.400 5.400M6.200 .8L.8 6.200" stroke="#111" strokeWidth=".9" />
  </svg>
);

function DetailPanel() {
  const rows: [string, number, string, string][] = [
    ["Bru", 16, "12", "19"],
    ["Con", 19, "19", "24"],
    ["Del", 15, "16", "24"],
    ["Dep", 19, "17", "24"],
    ["East", 22, "10", "24"],
    ["Kid", 14, "18", "24"],
    ["Lop", 17, "12", "24"],
  ];
  const head = "flex items-center border-r border-[#8ba4c6] text-[#1e395b] ";
  return (
    <div className={"flex w-[382px] shrink-0 flex-col bg-[#cbdaf0] " + TAHOMA}>
      <div className={"flex h-[33px] items-start justify-between bg-[#d0ddee] pt-[9px] pr-[13px] pl-[10px] text-[12px] leading-[18px] font-bold text-[#1e395b] " + ARIAL}>
        <T w={97.500}>Passende Lehrer</T>
        <div className="pt-[4px]">
          <Chevron />
        </div>
      </div>
      <div className="flex h-[29px] items-center pl-[6px] text-[12px] text-black">
        <T w={39}>8c, eRel</T>
      </div>
      <div className="mr-[1px] ml-[1px] flex h-[397px] flex-col border border-[#9db2cf] bg-[#cfddee] text-[11px]">
        <div className="flex h-[19px] w-[344px] border border-[#8ba4c6] bg-linear-to-b from-[#f3f8fe] to-[#dfeaf7]">
          <div className={head + "w-[11px] justify-center"}>
            <Star />
          </div>
          <div className={head + "w-[26px]"} />
          <div className={head + "w-[70px] pl-[1px]"}>
            <T w={31}>Lehrer</T>
          </div>
          <div className={head + "w-[52px] justify-end pr-[3px]"}>
            <T w={21}>Diff.</T>
          </div>
          <div className={head + "w-[92px] justify-end pr-[2px]"}>
            <T w={16.500}>Soll</T>
          </div>
          <div className="flex grow items-center pl-[1px] text-[#1e395b]">
            <T w={15.500}>Art</T>
          </div>
        </div>
        {rows.map(([n, w, d, s], i) => (
          <div key={n} className={"flex h-[19px] w-[344px] items-stretch " + (i % 2 ? "bg-[#fbfbf3]" : "bg-[#f1f5fb]")}>
            <div className="w-[12px] border-r border-b border-l border-[#8ba4c6] bg-linear-to-r from-[#f3f8fe] to-[#dfeaf7]" />
            <div className="flex grow items-center border-b border-[#cfdff3] text-black">
              <div className="w-[97px] pl-[27px]">
                <T w={w}>{n}</T>
              </div>
              <div className="w-[51px] text-right">
                <T w={11.500}>{d}</T>
              </div>
              <div className="w-[92px] text-right">
                <T w={11.500}>{s}</T>
              </div>
              <div className="pl-[3px]">
                <T w={12}>VZ</T>
              </div>
            </div>
          </div>
        ))}
        <div className="flex justify-center pt-[64px] pl-[18px] text-[22px] leading-[32px] text-[#ff6600]">
          <T w={303} className="font-['Lato',sans-serif]">
            Detailfenster `Passende Lehrer`
          </T>
        </div>
      </div>
      <div className="flex h-[105px] flex-col gap-[8px] pt-[3px] pl-[3px]">
        <Check text="Nur Fachlehrer" w={70.500} />
        <Check text="Allen Terminen zuweisen" w={117} on />
        <Check text="Nur Lehrer des Teams" w={105} />
        <Check text="Nur Lehrer mit ausreichender Diff." w={162} />
        <Check text="Auch verplante Lehrer" w={106.500} />
      </div>
      <div className="mt-[8px] flex gap-[6px] pl-[2px] text-[11px]">
        <div className="flex h-[25px] w-[72px] items-center justify-center rounded-[2px] border border-[#b5c5da] bg-[#cddbeb] pr-[3px] text-[#8a96a8]">
          <T w={45}>Zuweisen</T>
        </div>
        <div className="flex h-[25px] w-[72px] items-center justify-center rounded-[2px] border border-[#9fb4d3] bg-linear-to-b from-[#d5e2f2] to-[#e4eefa] pr-[3px] text-[#1e395b]">
          <T w={48}>Entfernen</T>
        </div>
        <div className="flex h-[25px] w-[72px] items-center justify-center rounded-[2px] border border-[#b5c5da] bg-[#cddbeb] pr-[3px] text-[#8a96a8]">
          <T w={54}>Hinzufügen</T>
        </div>
      </div>
      <div className="mt-[5px] h-[8px] shrink-0 border border-[#839cc0] bg-[#d5e7fa]" />
      <div className="flex grow flex-col bg-[#cfddee] pt-[1px] pr-[2px] pl-[2px]">
        <NavItem icon={<UnverplantIcon />} text="Unverplant" w={66.500} />
        <NavItem icon={<SigmaIcon />} text="Summen" w={52.500} />
        <NavItem icon={<DuoIcon />} text="Passende Lehrer" w={100} active />
        <NavItem icon={<CubeSmall />} text="Passende Räume" w={103} />
        <NavItem icon={<BlockIcon />} text="Block" w={32} />
        <NavItem icon={<BoltIcon />} text="Zeitkonflikte" w={77} />
        <div className="mt-[12px] ml-[360px]">
          <BigCaret />
        </div>
      </div>
    </div>
  );
}

/* ---------- timetable ---------- */

function NavBar({ className, mid }: { className: string; mid: string }) {
  return (
    <div className={"flex h-[32px] shrink-0 items-center bg-linear-to-b from-[#5a659f] via-[#23264a] via-55% to-black pr-[6px] pl-[12px] text-[12px] text-white " + ARIAL + " " + className}>
      <div className="flex w-[180px] shrink-0 items-center gap-[10px] pt-[2px]">
        <Tri dir="l" />
        <Tri dir="r" dim />
        <T w={45.500} className="-ml-[2px] pb-[2px]">Klassen</T>
      </div>
      <div className={"flex shrink-0 justify-center text-[16px] " + mid}>
        <T w={17} className="font-['DejaVu_Sans_Condensed','Noto_Sans',sans-serif] leading-[20px]">
          8c
        </T>
      </div>
      <div className="ml-auto flex items-center gap-[10px] pt-[2px]">
        <T w={67.500} className="mr-[40px]">Alle Wochen</T>
        <Tri dir="l" dim />
        <Tri dir="r" />
      </div>
    </div>
  );
}

function Timetable() {
  const times = [
    ["08:00", "08:45"],
    ["08:45", "09:30"],
    ["09:45", "10:30"],
    ["10:30", "11:15"],
    ["11:30", "12:15"],
    ["12:15", "13:00"],
    ["13:00", "13:45"],
    ["14:00", "14:45"],
    ["14:45", "15:30"],
  ];
  return (
    <div className={"flex w-[611px] shrink-0 flex-col bg-[#cbdaf0] text-[11px] text-[#111] " + TAHOMA}>
      <NavBar className="w-[611px]" mid="w-[134px]" />
      <div className="flex h-[775px] w-[611px] flex-col border-b border-l border-[#7b9fd9]">
        <div className="grid h-[22px] w-[592px] shrink-0 grid-cols-[52px_repeat(5,108px)] border-t border-b border-[#7b9fd9] bg-[#bbcfec]">
          {["X", "Mo", "Di", "Mi", "Do", "Fr"].map((d, i) => (
            <div key={d} className={"flex items-center justify-center border-[#7b9fd9] " + (i < 5 ? "border-r" : "") + (i ? " pl-[4px]" : "")}>
              {d}
            </div>
          ))}
        </div>
        {times.map(([a, b], r) => (
          <div key={r} className="grid h-[80px] w-[592px] shrink-0 grid-cols-[52px_repeat(5,108px)]">
            <div className="flex justify-between border-r border-b border-[#7b9fd9] bg-[#bbcfec] pt-[1px] pr-[3px] pl-[3px] leading-[14px]">
              <T w={7}>{String(r + 1)}</T>
              <div className="flex flex-col">
                <T w={28}>{a}</T>
                <T w={28}>{b}</T>
              </div>
            </div>
            {[0, 1, 2, 3, 4].map((c) => (
              <div key={c} className={"border-r border-b border-r-[#a0b9c8] bg-[#ffff80] " + (r === 5 ? "border-b-[#22dd22]" : "border-b-[#a0b9c8]")} />
            ))}
          </div>
        ))}
      </div>
      <div className="mt-[26px] flex h-[26px] bg-[#cfddee] pl-[4px]">
        <div className="flex w-[78px] items-start justify-center border-r border-b border-l border-[#8ba4c6] bg-white pt-[2px] text-[12px] text-[#1e395b]">
          <T w={13}>8c</T>
        </div>
      </div>
    </div>
  );
}

/* ---------- list of events ---------- */

const COLS = ["w-[11px]", "w-[22px]", "w-[57px]", "w-[62px]", "w-[99px]", "w-[112px]", "w-[99px]", "w-[45px]", "grow"];

function Events() {
  const heads: Line[] = [["", 0], ["", 0], ["Unverplant", 53], ["Lehrer", 32], ["Block", 26.500], ["Klassen", 39], ["Fach", 23.500], ["Dauer", 29], ["Termine", 38]];
  const rows: [string, string, number, string, string, number][] = [
    ["2", "SpJ", 17.500, "bg-[#17fb90] text-[#222]", "1 [Ha1] - 1 [Ha1]", 78],
    ["2", "SpM", 20.500, "bg-[#d08a14] text-white", "1 [Ha1] - 1 [Ha1]", 78],
    ["2", "eRel", 21.500, "bg-[#efc55b] text-black", "1 - 1", 21.500],
    ["2", "kRel", 20.500, "bg-[#ae9e31] text-white", "1 - 1", 21.500],
    ["4", "Deu", 20, "bg-[#ae7856] text-white", "1 - 1 - 1 - 1", 52],
  ];
  const blank = [0, 1, 2, 3, 4, 5, 6];
  const line = "border-b border-[#a5c6ea]";
  return (
    <div className={"flex w-[750px] shrink-0 flex-col bg-[#cbdaf0] text-[11px] " + TAHOMA}>
      <NavBar className="w-[748px]" mid="w-[272px]" />
      <div className="flex w-[748px] grow flex-col border-r border-l border-[#8fa9cf] bg-[#cfddee]">
        <div className="flex h-[21px] shrink-0 border-t-2 border-b border-[#8ba4c6] bg-linear-to-b from-[#f3f8fe] to-[#dfeaf7] text-[#1e395b]">
          {heads.map(([t, w], i) => (
            <div key={i} className={"flex shrink-0 items-center border-[#8ba4c6] pl-[2px] " + COLS[i] + (i < 8 ? " border-r" : "")}>
              {i === 0 ? <Star /> : t && <T w={w}>{t}</T>}
            </div>
          ))}
        </div>
        {rows.map(([u, f, fw, fc, t, w], i) => {
          const sel = i === 2 ? "bg-[#ff94ff] " : "";
          const cell = "flex shrink-0 items-center pl-[2px] text-black " + line + " ";
          return (
            <div key={f} className={"flex h-[19px] shrink-0 " + (i % 2 ? "bg-[#fbfbf3]" : "bg-[#f1f5fb]")}>
              <div className={"flex shrink-0 items-center justify-center border-r border-b border-[#8ba4c6] bg-[#eaf2fb] " + COLS[0]}>
                {i === 2 && (
                  <svg width="4" height="8" viewBox="0 0 4 8">
                    <path d="M0 0v8l4-4z" fill="#000" />
                  </svg>
                )}
              </div>
              <div className={cell + COLS[1] + " justify-center pr-[3px]"}>
                <svg width="6" height="8" viewBox="0 0 6 8">
                  <path d="M1 .8L4.300 4 1 7.200" fill="none" stroke="#3f4f70" strokeWidth="1.500" />
                </svg>
              </div>
              <div className={cell + sel + COLS[2]}>{u}</div>
              <div className={cell + COLS[3]} />
              <div className={cell + sel + COLS[4]} />
              <div className={cell + sel + COLS[5] + " pl-[3px]"}>
                <T w={12}>8c</T>
              </div>
              <div className={"flex shrink-0 items-center pl-[2px] " + line + " " + fc + " " + COLS[6]}>
                <T w={fw}>{f}</T>
              </div>
              <div className={cell + sel + COLS[7]}>{u}</div>
              <div className={cell + sel + COLS[8]}>
                <T w={w} className="ml-[1px]">{t}</T>
              </div>
            </div>
          );
        })}
        {blank.map((i) => (
          <div key={i} className={"h-[19px] shrink-0 " + line + (i % 2 ? " bg-[#f1f5fb]" : " bg-[#fbfbf3]")} />
        ))}
        <div className="mt-[346px] flex h-[18px] shrink-0 items-center justify-end border-b border-[#8fa9cf] bg-[#d5e2f2] pr-[6px]">
          <svg width="5" height="9" viewBox="0 0 5 9">
            <path d="M0 0v9l5-4.500z" fill="#3d4f74" />
          </svg>
        </div>
        <div className="h-[6px] shrink-0 bg-[#cbdaf0]" />
        <div className="flex h-[21px] shrink-0 items-center justify-end border-t-2 border-b border-[#8ba4c6] bg-linear-to-b from-[#f3f8fe] to-[#dfeaf7] text-[#1e395b]">
          <div className="flex h-full w-[14px] items-center border-l border-[#8ba4c6] pl-[1px]">
            <T w={11}>Kla</T>
          </div>
        </div>
        <div className={"flex h-[19px] shrink-0 items-center justify-end bg-[#f4f7fb] " + line}>
          <div className="w-[12px] text-black">
            <T w={11}>8c</T>
          </div>
        </div>
        <div className="mt-auto flex h-[18px] shrink-0 items-center justify-between border-b border-[#8fa9cf] bg-[#d3e1f1] pr-[6px] pl-[6px]">
          <svg width="5" height="9" viewBox="0 0 5 9">
            <path d="M5 0v9L0 4.500z" fill="#3d4f74" />
          </svg>
          <div className="mr-auto ml-[6px] flex h-[15px] w-[254px] items-center justify-center gap-[1px] rounded-[2px] border border-[#8fadd4] bg-linear-to-b from-[#dbe8f6] to-[#cfe0f3]">
            {[0, 1, 2, 3].map((i) => (
              <div key={i} className="h-[7px] w-px bg-[#7d98bd]" />
            ))}
          </div>
          <svg width="5" height="9" viewBox="0 0 5 9">
            <path d="M0 0v9l5-4.500z" fill="#3d4f74" />
          </svg>
        </div>
      </div>
    </div>
  );
}

/* ---------- dialog ---------- */

function Dialog() {
  const g = "border-[#c2c5ca] ";
  const names: Line[] = [["Bru", 16], ["Con", 19], ["Del", 15], ["Dep", 19], ["East", 22], ["Kid", 14], ["Lop", 17]];
  return (
    <div className={"absolute top-[312px] left-[1110px] flex h-[683px] w-[797px] flex-col border border-[#6b7078] bg-[#f0f0f0] text-[11px] shadow-[0_3px_18px_rgba(0,0,0,0.4)] " + TAHOMA}>
      <div className="flex h-[31px] shrink-0 items-center justify-between border-b border-[#8c9096] bg-white pr-[10px] pl-[8px]">
        <div className="flex items-center gap-[5px]">
          <AppIcon />
          <T w={122} className={"text-[12px] text-black " + SEGOE}>
            8c, eRel - Veranstaltung
          </T>
        </div>
        <svg width="11" height="11" viewBox="0 0 11 11" className="mb-[2px]">
          <path d="M.5 .5l10 10M10.500 .5l-10 10" stroke="#111" strokeWidth="1.100" />
        </svg>
      </div>
      <div className={"flex h-[98px] shrink-0 border-b border-[#7f868f] bg-linear-to-b from-white to-[#e1e4e9] text-[12px] shadow-[0_2px_3px_rgba(0,0,0,0.12)] " + SEGOE}>
        <Group className={g + "w-[153px]"} pad="pl-[6px]" caption={["Aktionen", 48]}>
          <RB className="w-[65px]" icon={<DiskIcon />} l1={["Schließen", 50]} />
          <Sep className="mr-[3px] ml-[4px]" />
          <RB className="w-[68px]" icon={<MailIcon />} l1={["E-Mail", 34]} l2={["schreiben", 50]} />
        </Group>
        <Group className={g + "w-[465px]"} pad="pl-[5px]" caption={["Anzeigen", 49]}>
          <RB className="w-[88px]" icon={<CalIcon />} l1={["Veranstaltung", 71.500]} />
          <RB className="w-[88px]" icon={<TeilnehmerVerIcon />} l1={["Teilnehmer", 57.500]} l2={["Veranstaltung", 71.500]} active />
          <RB className="w-[76px]" icon={<RessourcenIcon />} l1={["Ressourcen", 59]} l2={["Planung", 44]} />
          <RB className="w-[58px]" icon={<TermineIcon />} l1={["Termine", 42]} />
          <RB className="w-[75px]" icon={<TeilnehmerIcon />} l1={["Teilnehmer", 57.500]} l2={["Termine", 42]} />
          <RB className="w-[68px]" icon={<ClockIcon />} l1={["Zeitdetails", 54]} />
        </Group>
      </div>
      <div className="mx-[4px] mt-[9px] flex h-[513px] w-[787px] shrink-0 flex-col border border-[#dcdcdc] bg-white pl-[9px] text-black">
        <T w={148} className="mt-[7px] ml-[3px] h-[20px] self-start leading-[18px] font-bold">
          Veranstaltungsteilnehmer
        </T>
        <div className="ml-px flex h-[117px] w-[765px] flex-col border border-[#828790]">
          <div className="flex items-center gap-[1px] pt-[2px] pl-[24px] leading-[16px]">
            <PeopleSmall />
            <T w={12}>8c</T>
          </div>
          <div className="flex pt-[37px] pl-[295px] text-[22px] leading-[32px] text-[#ff6600]">
            <T w={284} className="font-['Lato',sans-serif]">
              Dialogfenster `Veranstaltung`
            </T>
          </div>
        </div>
        <div className="mt-[8px] flex gap-[8px] text-[11px] text-[#838383]">
          {([["Hinzufügen", 54], ["Ersetzen", 42], ["Entfernen", 48]] as Line[]).map(([t, w]) => (
            <div key={t} className="flex h-[24px] w-[126px] items-center justify-center border border-[#bfbfbf] bg-[#cccccc] pr-[4px]">
              <T w={w}>{t}</T>
            </div>
          ))}
        </div>
        <div className="mt-[14px] ml-[376px]">
          <Grip />
        </div>
        <div className="mt-[8px] flex h-[21px] items-end">
          <div className="z-10 -mr-px -mb-px flex h-[22px] w-[47px] items-start border border-b-0 border-[#d9d9d9] bg-white pt-[2px] pl-[5px]">
            <T w={31}>Lehrer</T>
          </div>
          {([["Räume", 33, "w-[44px] pl-[3px]"], ["Klassen", 36, "w-[48px]"], ["Platzhalter", 51, "w-[62px]"]] as [string, number, string][]).map(([t, w, c]) => (
            <div key={t} className={"flex h-[19px] items-center border border-b-0 border-l-0 border-[#d9d9d9] bg-[#f0f0f0] pl-[4px] " + c}>
              <T w={w}>{t}</T>
            </div>
          ))}
        </div>
        <div className="flex h-[284px] w-[767px] flex-col border border-[#d9d9d9] pl-[5px]">
          <div className="mt-[11px] flex h-[16px] gap-[6px] pl-[2px]">
            <Check text="Nur Lehrer des Teams" w={106} />
            <Check text="Nur ausreichende Soll-Differenz" w={152} />
            <Check text="Nur Fachlehrer" w={70.500} />
          </div>
          <div className="mt-[3px] flex h-[244px] w-[755px] flex-col border border-[#828790] pt-[2px] pl-[22px]">
            {names.map(([n, w]) => (
              <div key={n} className="flex h-[17px] items-center gap-[2px]">
                <PersonSmall />
                <T w={w}>{n}</T>
              </div>
            ))}
          </div>
        </div>
      </div>
      <div className="mt-auto flex h-[27px] items-end justify-end border-t border-[#9aa0a8] bg-linear-to-b from-[#e4e7ea] to-[#b5b8bc] p-[2px]">
        <svg width="11" height="11" viewBox="0 0 11 11">
          <path d="M8 0h2v2H8zM4 4h2v2H4zM8 4h2v2H8zM0 8h2v2H0zM4 8h2v2H4zM8 8h2v2H8z" fill="#f6f7f8" />
        </svg>
      </div>
    </div>
  );
}

function StatusBar() {
  return (
    <div className={"flex h-[27px] items-center border-t border-[#839cc0] bg-linear-to-b from-[#dbe6f4] via-[#c0d0e4] to-[#b0c2d8] text-[12px] text-[#1e395b] " + SEGOE}>
      <div className="flex h-full w-[965px] items-center border-r border-[#8ba1bf] pl-[2px]">
        <T w={392}>Schuljahr 2021/2022, Planausgabe 1, Gültig: So 01.08.2021 bis So 31.07.2022</T>
      </div>
      <div className="h-full w-[647px] border-r border-[#8ba1bf]" />
      <div className="flex h-full w-[286px] items-center gap-[4px] border-r border-[#8ba1bf] pl-[2px]">
        <svg width="15" height="15" viewBox="0 0 15 15">
          <path d="M0 1h15v3H0z" fill="#d8301a" />
          <path d="M3 2.500h9" stroke="#f5b0a0" />
          <path d="M5.500 1.500l2 3 2-3" fill="none" stroke="#8b8f95" strokeWidth="1.300" />
          <path d="M6 5h3v10H6z" fill="#d8301a" />
          <path d="M7.500 5v9" stroke="#f5a090" strokeWidth=".8" />
        </svg>
        <T w={140}>Nicht verbunden ! (offline)</T>
      </div>
    </div>
  );
}

export default function App() {
  return (
    <div className="relative h-[1080px] w-[1960px] overflow-hidden bg-white p-[20px]">
      <Defs />
      <div className="flex h-[1040px] w-[1920px] flex-col overflow-hidden bg-[#cbdaf0] shadow-[0_0_20px_rgba(0,0,0,0.68)]">
        <TitleArea />
        <Ribbon />
        <div className="h-[4px] shrink-0 border-t border-[#7f9cc4] bg-linear-to-b from-[#a5bad6] to-[#c4d4ea]" />
        <div className="flex h-[859px] shrink-0">
          <LeftPanel />
          <div className="flex w-[8px] shrink-0 flex-col items-center pt-[422px] pl-[1px]">
            <Grip vertical />
          </div>
          <DetailPanel />
          <div className="w-[6px] shrink-0 pt-[422px] pl-[2px]">
            <Grip vertical />
          </div>
          <Timetable />
          <div className="w-[6px] shrink-0" />
          <Events />
        </div>
        <StatusBar />
      </div>
      <div className="absolute top-[168px] left-[177px] h-[619px] w-[395px] border-2 border-[#ff6600]" />
      <Dialog />
      <div className="absolute top-[309px] left-[1107px] h-[692px] w-[802px] border-2 border-[#ff6600]" />
    </div>
  );
}
